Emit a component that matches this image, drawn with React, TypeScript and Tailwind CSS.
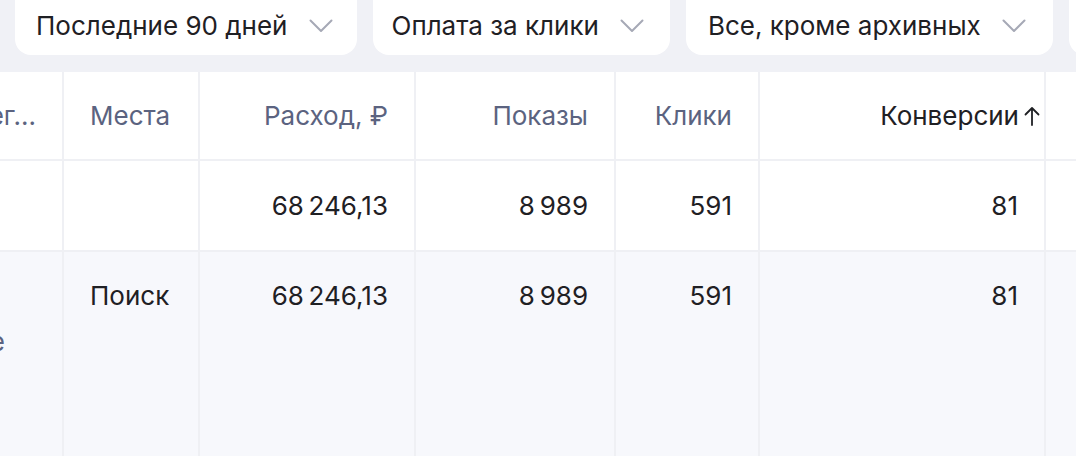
import React from "react";

type Filter = { label: string };

const filters: Filter[] = [
  { label: "Последние 90 дней" },
  { label: "Оплата за клики" },
  { label: "Все, кроме архивных" },
  { label: "Ещё" },
];

function Chevron() {
  return (
    <svg width="24" height="14" viewBox="0 0 24 14" fill="none" className="shrink-0">
      <path d="M1.5 1.5 L12 12 L22.5 1.5" stroke="#a6a9b6" strokeWidth="2" strokeLinecap="round" strokeLinejoin="round" />
    </svg>
  );
}

function ArrowUp() {
  return (
    <svg width="16" height="20" viewBox="0 0 16 20" fill="none" className="shrink-0">
      <path d="M8 19 V2 M1.5 8.5 L8 2 L14.5 8.5" stroke="#1f2024" strokeWidth="1.8" strokeLinecap="round" strokeLinejoin="round" />
    </svg>
  );
}

const cell = "border-r-2 border-[#eff0f4] px-[26px] overflow-hidden";

export default function App() {
  return (
    <div className="w-[1076px] h-[456px] overflow-hidden bg-white text-[26px] font-['Inter','Noto_Sans',sans-serif]">
      {/* filters */}
      <div className="bg-[#f0f1f6] h-[72px] flex gap-4 pl-[15px] overflow-hidden">
        {filters.map((f, i) => (
          <div
            key={f.label}
            className={`shrink-0 h-[71px] -mt-4 bg-white rounded-2xl flex items-center gap-[21px] pt-[13px] ${
              i === 2 ? "pl-[22px] pr-[27px]" : i === 1 ? "pl-[19px] pr-[26px]" : "pl-[21px] pr-[24px]"
            }`}
          >
            <span className="text-[#1f2024] leading-[32px] whitespace-nowrap">{f.label}</span>
            <Chevron />
          </div>
        ))}
      </div>

      {/* table */}
      <div className="grid grid-cols-[64px_136px_216px_200px_144px_286px_1fr] text-[#1f2024] leading-[31px]">
        {/* header */}
        <div className={`${cell} border-b-2 py-[28px] flex justify-end text-[#5b6380]`}>
          <span className="shrink-0 whitespace-nowrap">Стратег...</span>
        </div>
        <div className={`${cell} border-b-2 py-[28px] text-[#5b6380]`}>Места</div>
        <div className={`${cell} border-b-2 py-[28px] text-right text-[#5b6380]`}>Расход, ₽</div>
        <div className={`${cell} border-b-2 py-[28px] text-right text-[#5b6380]`}>Показы</div>
        <div className={`${cell} border-b-2 py-[28px] text-right text-[#5b6380]`}>Клики</div>
        <div className={`${cell} border-b-2 py-[28px] flex justify-end items-center overflow-visible`}>
          <span className="whitespace-nowrap">Конверсии</span>
          <span className="-mr-[22px] ml-[5px]">
            <ArrowUp />
          </span>
        </div>
        <div className={`${cell} border-b-2 py-[28px]`} />

        {/* total row */}
        <div className={`${cell} border-b-2 pt-[29px] pb-[29px]`} />
        <div className={`${cell} border-b-2 pt-[29px] pb-[29px]`} />
        <div className={`${cell} border-b-2 pt-[29px] pb-[29px] text-right`}>68&#8239;246,13</div>
        <div className={`${cell} border-b-2 pt-[29px] pb-[29px] text-right`}>8&#8239;989</div>
        <div className={`${cell} border-b-2 pt-[29px] pb-[29px] text-right`}>591</div>
        <div className={`${cell} border-b-2 pt-[29px] pb-[29px] text-right`}>81</div>
        <div className={`${cell} border-b-2 pt-[29px] pb-[29px]`} />

        {/* data row */}
        <div className={`${cell} bg-[#f7f8fc] pt-[28px] h-[205px] flex flex-col items-end`}>
          <span className="shrink-0 whitespace-nowrap mr-[90px]">Ключевые фразы</span>
          <span className="shrink-0 whitespace-nowrap mr-[31px] mt-[15px] text-[#5b6380]">в автотаргетинге</span>
        </div>
        <div className={`${cell} bg-[#f7f8fc] pt-[28px]`}>Поиск</div>
        <div className={`${cell} bg-[#f7f8fc] pt-[28px] text-right`}>68&#8239;246,13</div>
        <div className={`${cell} bg-[#f7f8fc] pt-[28px] text-right`}>8&#8239;989</div>
        <div className={`${cell} bg-[#f7f8fc] pt-[28px] text-right`}>591</div>
        <div className={`${cell} bg-[#f7f8fc] pt-[28px] text-right`}>81</div>
        <div className={`${cell} bg-[#f7f8fc] pt-[28px]`} />
      </div>
    </div>
  );
}
